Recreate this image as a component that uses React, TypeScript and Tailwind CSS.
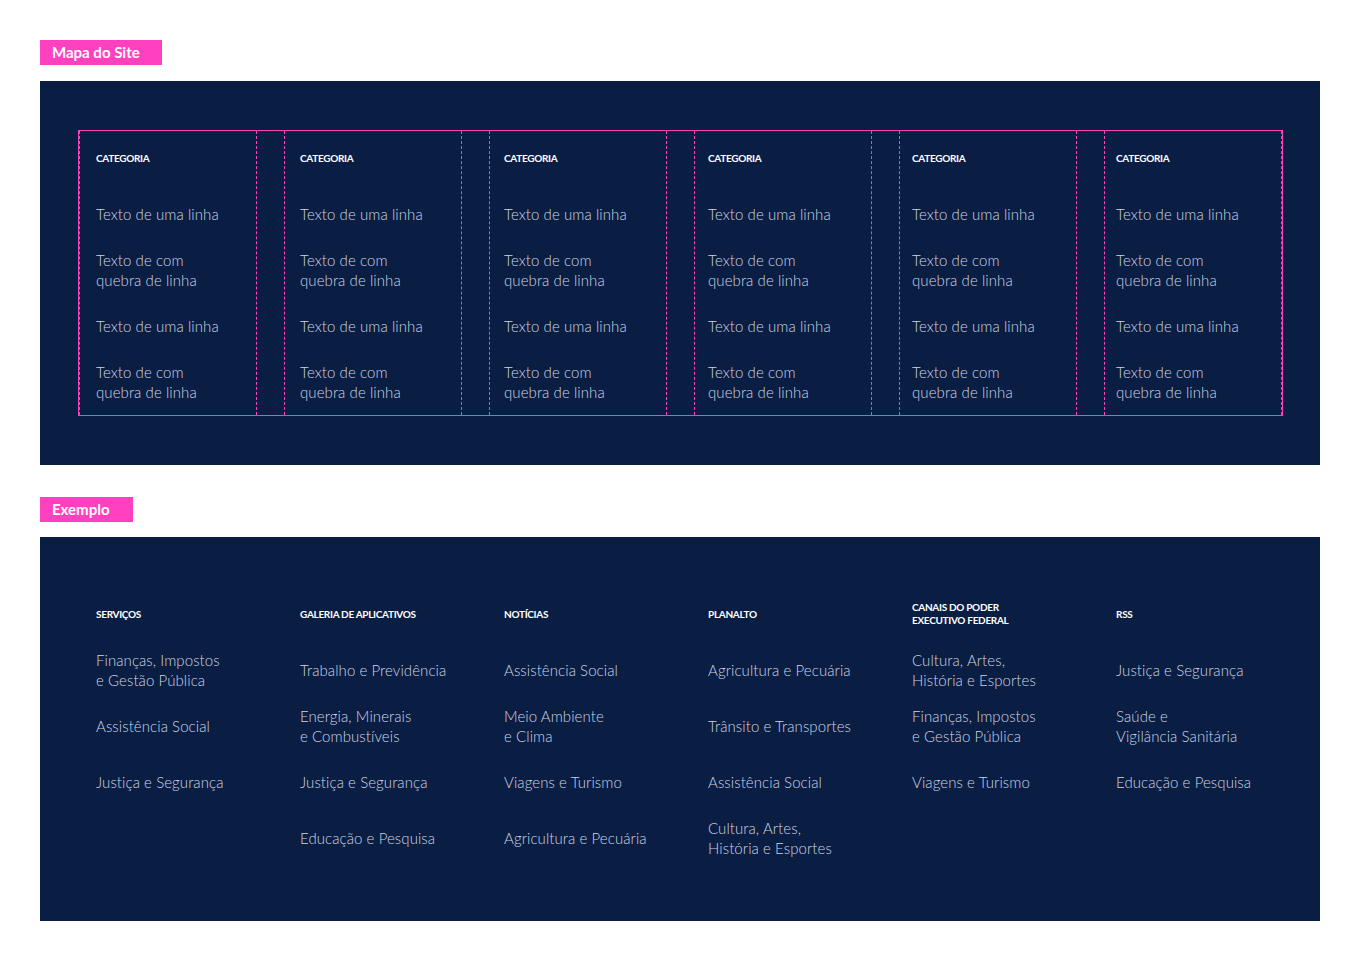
const FONT = { fontFamily: "Lato, 'Open Sans', sans-serif" };

const mapaItems = [
  "Texto de uma linha",
  "Texto de com\nquebra de linha",
  "Texto de uma linha",
  "Texto de com\nquebra de linha",
];

// o texto segue um passo de 204px, as guias tracejadas um passo de 205px
const colPad = ["pl-4", "pl-[15px]", "pl-[14px]", "pl-[13px]", "pl-[12px]", "pl-[11px]"];

const exemplo: { title: string; items: string[] }[] = [
  {
    title: "SERVIÇOS",
    items: ["Finanças, Impostos\ne Gestão Pública", "Assistência Social", "Justiça e Segurança"],
  },
  {
    title: "GALERIA DE APLICATIVOS",
    items: ["Trabalho e Previdência", "Energia, Minerais\ne Combustíveis", "Justiça e Segurança", "Educação e Pesquisa"],
  },
  {
    title: "NOTÍCIAS",
    items: ["Assistência Social", "Meio Ambiente\ne Clima", "Viagens e Turismo", "Agricultura e Pecuária"],
  },
  {
    title: "PLANALTO",
    items: ["Agricultura e Pecuária", "Trânsito e Transportes", "Assistência Social", "Cultura, Artes,\nHistória e Esportes"],
  },
  {
    title: "CANAIS DO PODER\nEXECUTIVO FEDERAL",
    items: ["Cultura, Artes,\nHistória e Esportes", "Finanças, Impostos\ne Gestão Pública", "Viagens e Turismo"],
  },
  {
    title: "RSS",
    items: ["Justiça e Segurança", "Saúde e\nVigilância Sanitária", "Educação e Pesquisa"],
  },
];

function Label({ text, width }: { text: string; width: string }) {
  return (
    <div className={`h-[25px] ${width} bg-[#ff40bf] pl-[12px] text-[15px] font-bold leading-[25px] text-white`}>
      {text}
    </div>
  );
}

function Heading({ text }: { text: string }) {
  return (
    <h4 className="whitespace-pre-line text-[10px] font-bold uppercase leading-[13px] tracking-[-0.03em] text-white">
      {text}
    </h4>
  );
}

export default function App() {
  return (
    <div className="min-h-[961px] bg-white px-10 pt-10 pb-10" style={FONT}>
      <Label text="Mapa do Site" width="w-[122px]" />

      {/* mapa: grade com marcações */}
      <section className="mt-4 bg-[#0a1d42] pt-[49px] pr-[37px] pb-[49px] pl-[38px]">
        <div className="flex gap-[27px] border border-[#ff3fb8]">
          {colPad.map((pad, i) => (
            <div
              key={i}
              className={`w-[178px] shrink-0 border-x border-dashed border-[#ff3fb8] pt-[21px] pr-2 pb-[13px] ${pad}`}
            >
              <div className="text-[10px] font-bold leading-[12px] tracking-[-0.03em] text-white">CATEGORIA</div>
              <ul className="mt-10 flex flex-col gap-[26px]">
                {mapaItems.map((t, j) => (
                  <li key={j} className="whitespace-pre-line text-[15px] font-light leading-5 tracking-[0.005em] text-[#cdd5e6]">
                    {t}
                  </li>
                ))}
              </ul>
            </div>
          ))}
        </div>
      </section>

      <div className="mt-8">
        <Label text="Exemplo" width="w-[93px]" />
      </div>

      <section className="mt-[15px] bg-[#0a1d42] pt-16 pr-6 pb-[63px] pl-14">
        <div className="flex">
          {exemplo.map((col) => (
            <div key={col.title} className="w-[204px] shrink-0 pr-4">
              <div className="flex h-[26px] items-center">
                <Heading text={col.title} />
              </div>
              <ul className="mt-[23px] flex flex-col gap-4">
                {col.items.map((t, j) => (
                  <li
                    key={j}
                    className="flex h-10 items-center whitespace-pre-line text-[15px] font-light leading-5 tracking-[0.005em] text-[#cdd5e6]"
                  >
                    {t}
                  </li>
                ))}
              </ul>
            </div>
          ))}
        </div>
      </section>
    </div>
  );
}
